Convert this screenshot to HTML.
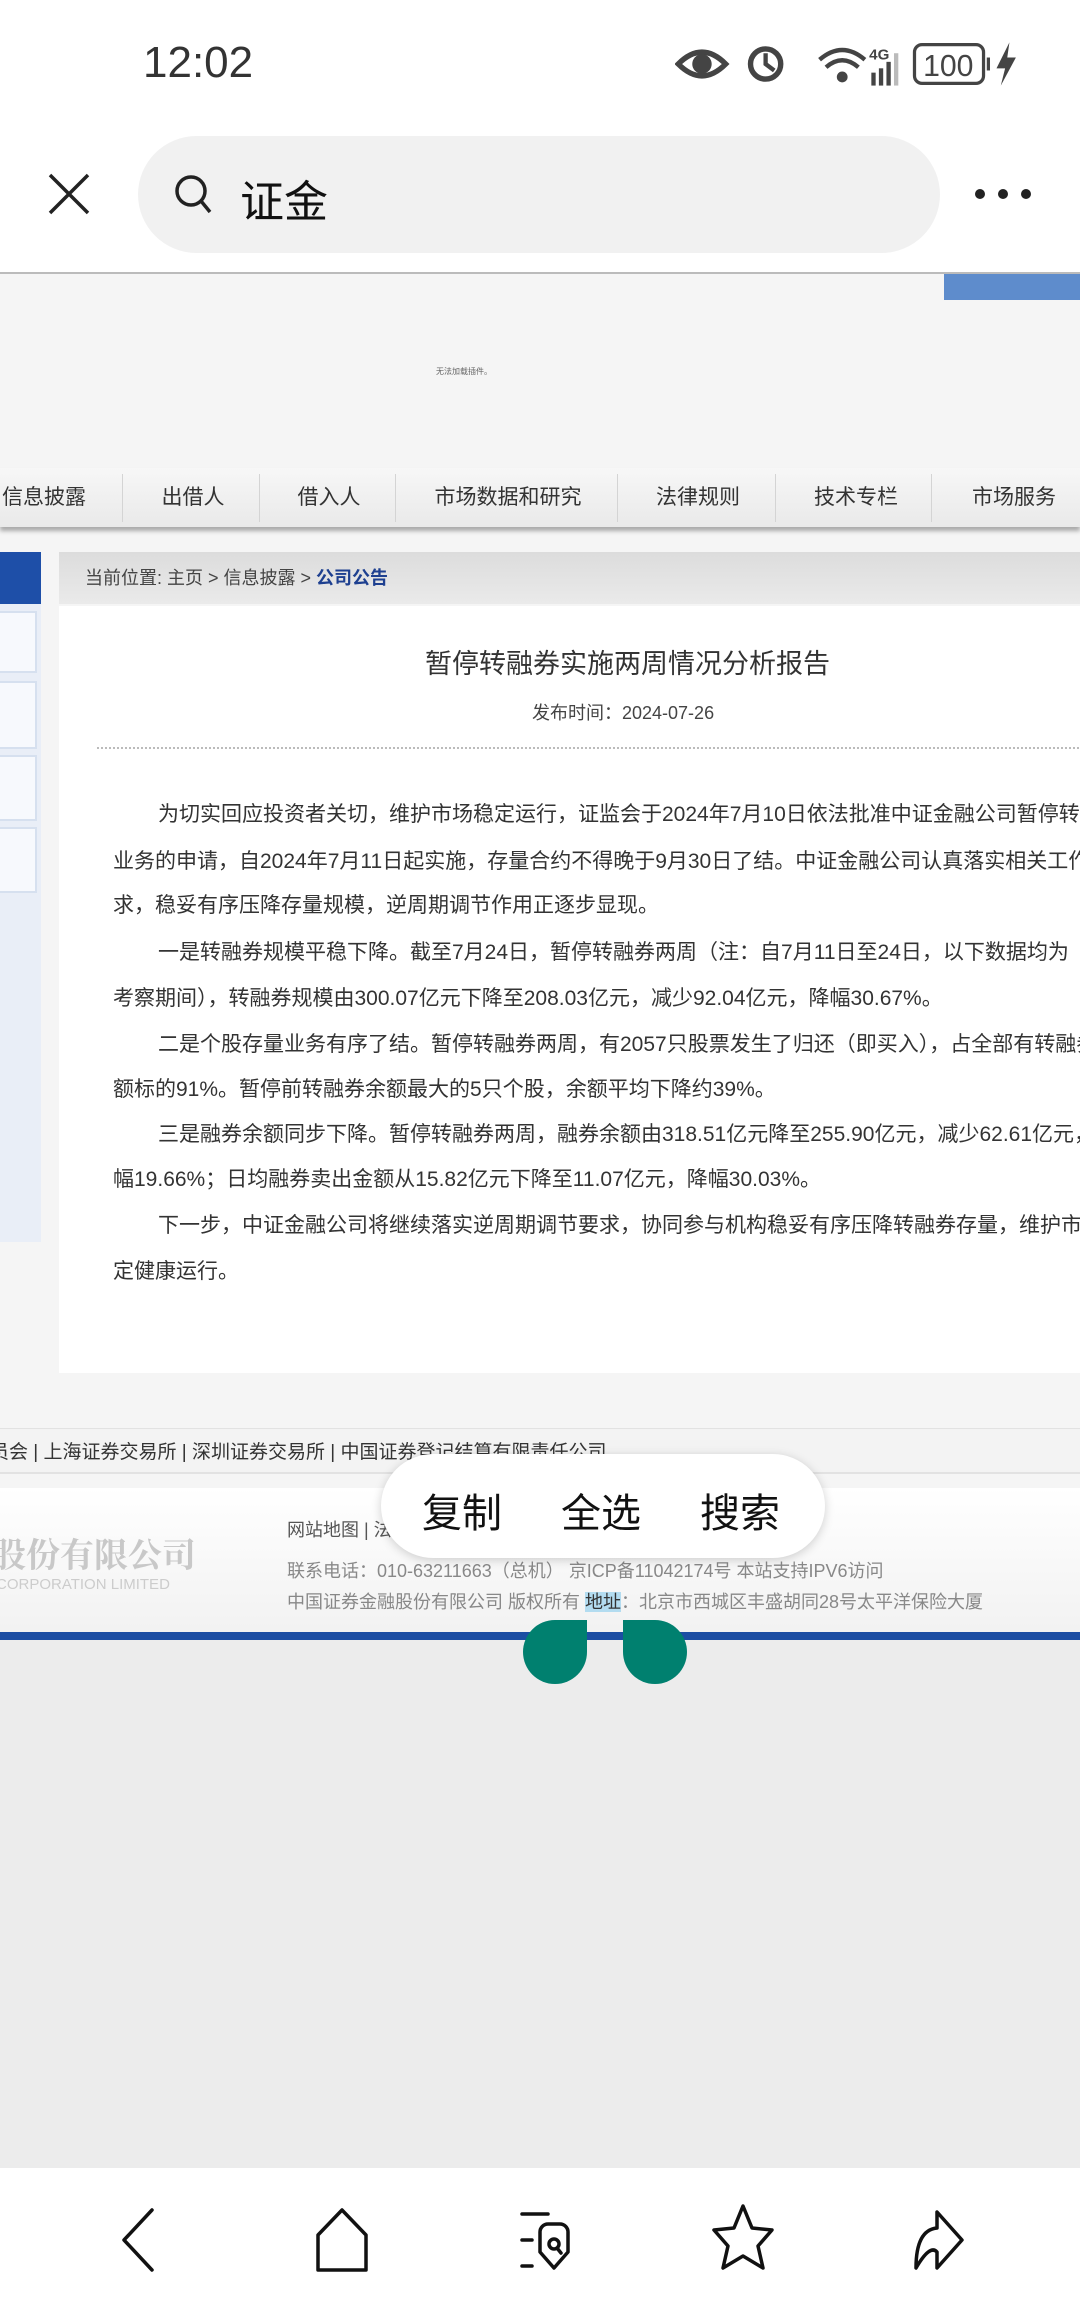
<!DOCTYPE html>
<html><head><meta charset="utf-8"><style>
*{margin:0;padding:0;box-sizing:border-box}
body{width:1080px;height:2310px;overflow:hidden;background:#ececec;font-family:"Liberation Sans","Noto Sans CJK SC",sans-serif;position:relative;color:#333}
.a{position:absolute;white-space:nowrap}
.nav span{position:absolute;top:0;height:59px;line-height:59px;font-size:21px;color:#333;transform:translateX(-50%)}
.sep{position:absolute;top:6px;width:1px;height:48px;background:#d4d4d4}
.p{position:absolute;font-size:21px;color:#333;white-space:nowrap;line-height:30px}
</style></head><body>
<div class="a" style="left:0;top:0;width:1080px;height:272px;background:#fff"></div>
<div class="a" style="left:143px;top:38px;font-size:44px;color:#333">12:02</div>
<svg class="a" style="left:675px;top:38px" width="356" height="52" viewBox="0 0 330 48">
<g fill="#444">
<path d="M3 24 Q25 2 47 24 Q25 46 3 24Z" fill="none" stroke="#444" stroke-width="5"/>
<circle cx="25" cy="24" r="9"/>
<circle cx="84" cy="24" r="14" fill="none" stroke="#444" stroke-width="5"/>
<path d="M84 14 V24 L92 30" stroke="#444" stroke-width="4" fill="none"/>
<path d="M134 20 Q155 2 176 20" stroke="#444" stroke-width="4" fill="none"/>
<path d="M140 27 Q155 14 170 27" stroke="#444" stroke-width="4" fill="none"/>
<circle cx="155" cy="36" r="5"/>
<text x="180" y="20" font-size="14" font-family="Liberation Sans" font-weight="bold">4G</text>
<rect x="182" y="32" width="4" height="12"/><rect x="189" y="28" width="4" height="16"/><rect x="196" y="22" width="4" height="22"/><rect x="203" y="14" width="4" height="30" fill="#bbb"/>
<rect x="222" y="6" width="64" height="36" rx="7" fill="none" stroke="#444" stroke-width="3"/>
<text x="230" y="35" font-size="28" font-family="Liberation Sans">100</text>
<rect x="289" y="18" width="3" height="12"/>
<path d="M310 4 L298 28 H306 L302 44 L316 18 H308Z"/>
</g></svg>
<svg class="a" style="left:46px;top:171px" width="46" height="46"><path d="M4 4 L42 42 M42 4 L4 42" stroke="#222" stroke-width="3.5"/></svg>
<div class="a" style="left:138px;top:136px;width:802px;height:117px;border-radius:59px;background:#f1f1f1"></div>
<svg class="a" style="left:172px;top:172px" width="44" height="44"><circle cx="19" cy="19" r="14" fill="none" stroke="#222" stroke-width="3.5"/><path d="M29 29 L38 40" stroke="#222" stroke-width="3.5"/></svg>
<div class="a" style="left:240px;top:166px;font-size:44px;color:#111">证金</div>
<div class="a" style="left:975px;top:189px;width:10px;height:10px;border-radius:5px;background:#222"></div>
<div class="a" style="left:998px;top:189px;width:10px;height:10px;border-radius:5px;background:#222"></div>
<div class="a" style="left:1021px;top:189px;width:10px;height:10px;border-radius:5px;background:#222"></div>
<div class="a" style="left:0;top:272px;width:1080px;height:1368px;background:#f5f5f5;border-top:2px solid #bbb;overflow:hidden"></div>
<div class="a" style="left:944px;top:274px;width:136px;height:26px;background:#5e8ccc"></div>
<div class="a" style="left:436px;top:366px;font-size:8px;color:#666">无法加载插件。</div>
<div class="a nav" style="left:0;top:468px;width:1080px;height:59px;background:linear-gradient(#f7f7f7,#e9e9e9);box-shadow:0 4px 4px #aaa">
<span style="left:44px">信息披露</span><span style="left:193px">出借人</span><span style="left:329px">借入人</span><span style="left:508px">市场数据和研究</span><span style="left:698px">法律规则</span><span style="left:856px">技术专栏</span><span style="left:1014px">市场服务</span>
<div class="sep" style="left:122px"></div><div class="sep" style="left:259px"></div><div class="sep" style="left:395px"></div><div class="sep" style="left:617px"></div><div class="sep" style="left:775px"></div><div class="sep" style="left:931px"></div>
</div>
<div class="a" style="left:0;top:552px;width:41px;height:52px;background:#1e4fa8"></div>
<div class="a" style="left:0;top:604px;width:41px;height:638px;background:#e9eef7"></div>
<div class="a" style="left:-4px;top:611px;width:41px;height:62px;background:#f7f9fd;border:2px solid #d6e0ef"></div>
<div class="a" style="left:-4px;top:681px;width:41px;height:68px;background:#f7f9fd;border:2px solid #d6e0ef"></div>
<div class="a" style="left:-4px;top:755px;width:41px;height:66px;background:#f7f9fd;border:2px solid #d6e0ef"></div>
<div class="a" style="left:-4px;top:827px;width:41px;height:66px;background:#f7f9fd;border:2px solid #d6e0ef"></div>
<div class="a" style="left:59px;top:552px;width:1021px;height:52px;background:linear-gradient(#dcdcdc,#eaeaea);font-size:18px;line-height:52px;padding-left:26px;color:#444">当前位置: 主页 &gt; 信息披露 &gt; <b style="color:#1e4090">公司公告</b></div>
<div class="a" style="left:59px;top:606px;width:1021px;height:767px;background:#fff;overflow:hidden">
<div class="a" style="left:366px;top:36px;font-size:27px;color:#333">暂停转融券实施两周情况分析报告</div>
<div class="a" style="left:473px;top:93px;font-size:18px;color:#444">发布时间：2024-07-26</div>
<div class="a" style="left:38px;top:141px;width:990px;border-top:2px dotted #bbb"></div>
<div class="p" style="left:99px;top:194px">为切实回应投资者关切，维护市场稳定运行，证监会于2024年7月10日依法批准中证金融公司暂停转融券</div>
<div class="p" style="left:54px;top:241px">业务的申请，自2024年7月11日起实施，存量合约不得晚于9月30日了结。中证金融公司认真落实相关工作要</div>
<div class="p" style="left:54px;top:285px">求，稳妥有序压降存量规模，逆周期调节作用正逐步显现。</div>
<div class="p" style="left:99px;top:332px">一是转融券规模平稳下降。截至7月24日，暂停转融券两周（注：自7月11日至24日，以下数据均为</div>
<div class="p" style="left:54px;top:378px">考察期间），转融券规模由300.07亿元下降至208.03亿元，减少92.04亿元，降幅30.67%。</div>
<div class="p" style="left:99px;top:424px">二是个股存量业务有序了结。暂停转融券两周，有2057只股票发生了归还（即买入），占全部有转融券余</div>
<div class="p" style="left:54px;top:469px">额标的91%。暂停前转融券余额最大的5只个股，余额平均下降约39%。</div>
<div class="p" style="left:99px;top:514px">三是融券余额同步下降。暂停转融券两周，融券余额由318.51亿元降至255.90亿元，减少62.61亿元，降</div>
<div class="p" style="left:54px;top:559px">幅19.66%；日均融券卖出金额从15.82亿元下降至11.07亿元，降幅30.03%。</div>
<div class="p" style="left:99px;top:605px">下一步，中证金融公司将继续落实逆周期调节要求，协同参与机构稳妥有序压降转融券存量，维护市场</div>
<div class="p" style="left:54px;top:651px">定健康运行。</div>
</div>
<div class="a" style="left:0;top:1428px;width:1080px;height:46px;background:#f3f3f3;border-top:1px solid #e2e2e2;border-bottom:2px solid #e2e2e2"></div>
<div class="a" style="left:-10px;top:1437px;font-size:19px;color:#333">员会 | 上海证券交易所 | 深圳证券交易所 | 中国证券登记结算有限责任公司</div>
<div class="a" style="left:0;top:1488px;width:1080px;height:144px;background:linear-gradient(#fff,#f2f2f2)"></div>
<div class="a" style="left:-8px;top:1528px;font-size:34px;color:#c8c8c8;font-family:'Noto Serif CJK SC',serif;font-weight:bold">股份有限公司</div>
<div class="a" style="left:-4px;top:1576px;font-size:15px;color:#ccc">CORPORATION LIMITED</div>
<div class="a" style="left:287px;top:1516px;font-size:18px;color:#555">网站地图 | 法</div>
<div class="a" style="left:287px;top:1557px;font-size:18px;color:#888">联系电话：010-63211663（总机） 京ICP备11042174号 本站支持IPV6访问</div>
<div class="a" style="left:287px;top:1588px;font-size:18px;color:#888">中国证券金融股份有限公司 版权所有 <span style="background:#b3dcf0;color:#333">地址</span>：北京市西城区丰盛胡同28号太平洋保险大厦</div>
<div class="a" style="left:0;top:1632px;width:1080px;height:8px;background:#1c4ea3"></div>
<div class="a" style="left:381px;top:1454px;width:444px;height:104px;border-radius:52px;background:#fff;box-shadow:0 2px 10px rgba(0,0,0,.18)"></div>
<div class="a" style="left:422px;top:1481px;font-size:40px;color:#111">复制</div>
<div class="a" style="left:561px;top:1481px;font-size:40px;color:#111">全选</div>
<div class="a" style="left:700px;top:1481px;font-size:40px;color:#111">搜索</div>
<div class="a" style="left:523px;top:1620px;width:64px;height:64px;background:#00806f;border-radius:32px 0 32px 32px"></div>
<div class="a" style="left:623px;top:1620px;width:64px;height:64px;background:#00806f;border-radius:0 32px 32px 32px"></div>
<div class="a" style="left:0;top:2168px;width:1080px;height:142px;background:#fff"></div>
<svg class="a" style="left:0;top:2200px" width="1080" height="80" viewBox="0 0 1080 80" fill="none" stroke="#111" stroke-width="3.5" stroke-linejoin="round" stroke-linecap="round">
<path d="M152 10 L124 40 L152 70"/>
<path d="M342 10 L318 35 V70 H366 V35 Z"/>
<path d="M522 14 H548 M522 40 H532 M522 66 H532"/>
<path d="M540 32 a8 8 0 0 1 8 -8 h12 a8 8 0 0 1 8 8 v20 l-14 16 l-14 -16z"/>
<circle cx="554" cy="44" r="5"/><path d="M557 48 l4 5"/>
<path d="M743 6 L752 28 L772 30 L758 46 L763 68 L743 56 L723 68 L728 46 L714 30 L734 28 Z"/>
<path d="M937 12 L962 40 L937 68 V52 Q930 44 916 68 Q916 30 937 28 Z"/>
</svg>
</body></html>
